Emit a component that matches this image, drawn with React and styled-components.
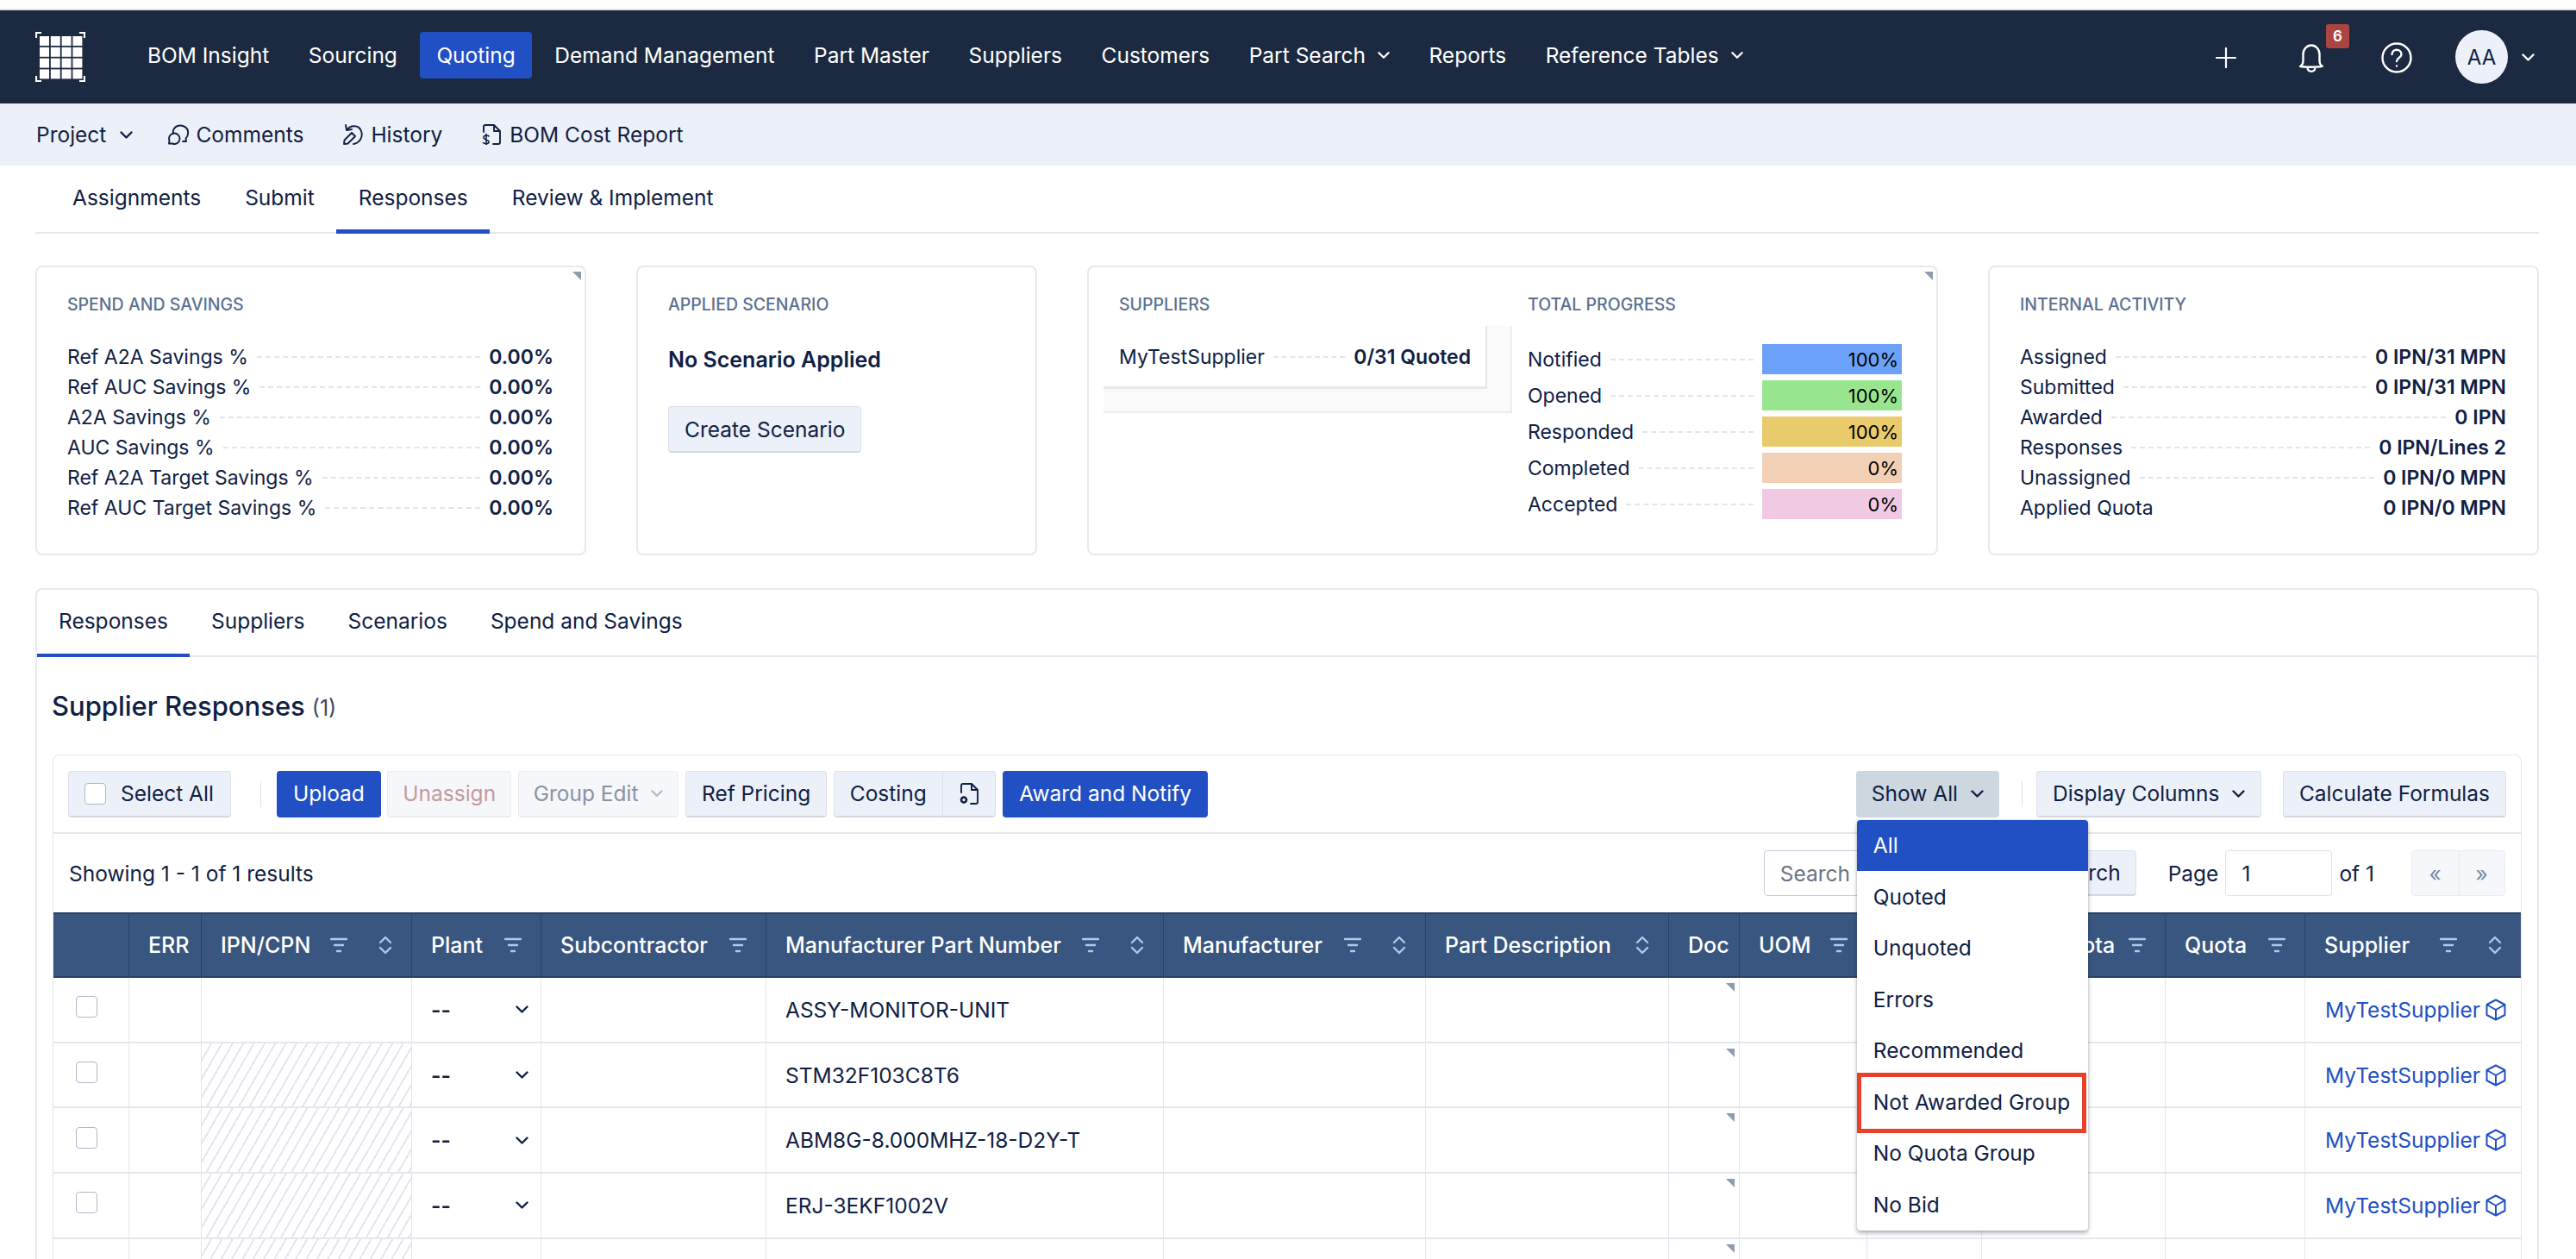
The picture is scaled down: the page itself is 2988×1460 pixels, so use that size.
import React from "react";
import styled, { createGlobalStyle, css } from "styled-components";

const ink = "#0f2044";
const blue = "#2150c4";
const line = "#e4e7ee";

const Global = createGlobalStyle`
  html, body { margin: 0; padding: 0; background: #fff; height: 1460px; overflow: hidden; }
  body { font-family: Inter, "Liberation Sans", sans-serif; color: ${ink}; }
  * { box-sizing: border-box; }
`;

const Page = styled.div`
  width: 2988px;
  height: 1460px;
  overflow: hidden;
  padding-top: 10px;
`;

const Header = styled.header`
  height: 110px;
  border-top: 2px solid #dfe2e4;
  background: #1b2a41;
  display: flex;
  align-items: center;
  padding: 0 48px 0 41px;
`;
const Logo = styled.svg`
  width: 58px;
  height: 58px;
  margin: 0 53px 0 0;
  flex: none;
`;
const MainNav = styled.nav`
  display: flex;
  gap: 7.5px;
  margin-top: -4px;
`;
const NavItem = styled.a`
  height: 54px;
  padding: 0 19px;
  display: flex;
  align-items: center;
  gap: 14px;
  border-radius: 4px;
  color: #fff;
  font-size: 24.5px;
  background: ${(p) => (p.$active ? blue : "transparent")};
`;
const HeaderTools = styled.div`
  margin-left: auto;
  display: flex;
  align-items: center;
  color: #fff;
`;
const IconSlot = styled.div`
  position: relative;
  display: flex;
  margin-left: ${(p) => p.$ml || 0}px;
  margin-top: ${(p) => p.$mt || 0}px;
`;
const Badge = styled.span`
  position: absolute;
  left: 32px;
  top: -23px;
  width: 27px;
  height: 28px;
  border-radius: 3px;
  background: #ab4541;
  color: #fff;
  font-size: 17px;
  font-weight: 600;
  display: flex;
  align-items: center;
  justify-content: center;
`;
const Avatar = styled.div`
  width: 61px;
  height: 62px;
  border-radius: 50%;
  margin-left: 50px;
  background: #ecf0f8;
  color: ${ink};
  font-size: 24px;
  display: flex;
  align-items: center;
  justify-content: center;
`;

const SubNav = styled.div`
  height: 72px;
  background: #ecf0f8;
  display: flex;
  align-items: center;
  padding-left: 42px;
  font-size: 24.5px;
`;
const SubItem = styled.a`
  display: flex;
  align-items: center;
  gap: ${(p) => p.$gap || 8}px;
  margin-right: ${(p) => p.$mr || 0}px;
  color: ${ink};
`;

const PageTabs = styled.div`
  height: 79px;
  margin: 0 43px 0 41px;
  padding-left: 17.5px;
  display: flex;
  border-bottom: 2px solid ${line};
`;
const PageTab = styled.a`
  padding: 0 25.5px;
  display: flex;
  align-items: center;
  font-size: 24.5px;
  color: ${ink};
  border-bottom: 5px solid ${(p) => (p.$active ? blue : "transparent")};
  height: 79px;
`;

const Cards = styled.section`
  display: grid;
  grid-template-columns: 639px 465px 987px 639px;
  column-gap: 58px;
  padding: 37px 0 0 41px;
  width: 2945px;
`;
const Card = styled.article`
  position: relative;
  height: 336px;
  border: 2px solid #e6e9ef;
  border-radius: 8px;
  padding: 31px 36px 0 35px;
  ${(p) =>
    p.$split &&
    css`
      display: grid;
      grid-template-columns: 474px 1fr;
      padding: 31px 40px 0 17px;
    `}
`;
const Corner = styled.span`
  position: absolute;
  top: ${(p) => p.$top || 5}px;
  right: ${(p) => p.$right || 4}px;
  width: 0;
  height: 0;
  border-style: solid;
  border-width: 0 10px 10px 0;
  border-color: transparent #8f9bb0 transparent transparent;
`;
const CardTitle = styled.h3`
  margin: 0;
  height: 24px;
  line-height: 24px;
  font-size: 19.5px;
  font-weight: 500;
  color: #5b7090;
  text-transform: uppercase;
`;
const Rows = styled.div`
  margin-top: 31.5px;
  display: flex;
  flex-direction: column;
`;
const Row = styled.div`
  height: 35px;
  display: flex;
  align-items: center;
  font-size: 23px;
`;
const Leader = styled.span`
  flex: 1;
  min-width: 0;
  margin: 0 10px;
  border-top: 2px dashed ${(p) => (p.$hidden ? "transparent" : "#e1e5ec")};
`;
const Value = styled.b`
  font-weight: 600;
`;
const ScenarioName = styled.div`
  margin-top: 35px;
  font-size: 25px;
  font-weight: 600;
  height: 34px;
  line-height: 34px;
`;
const Button = styled.button`
  font-family: inherit;
  height: 54px;
  padding: 0 ${(p) => p.$pad || 17}px;
  margin-left: ${(p) => p.$ml || 0}px;
  font-size: 24.5px;
  display: inline-flex;
  align-items: center;
  gap: 15px;
  flex: none;
  border-radius: 4px;
  border: 1.5px solid #dde1e9;
  border-bottom: 2.5px solid #d3d8e1;
  background: #ecf0f8;
  color: ${ink};
  ${(p) =>
    p.$primary &&
    css`
      background: ${blue};
      border-color: ${blue};
      color: #fff;
    `}
  ${(p) =>
    p.$disabled &&
    css`
      background: #f5f7fb;
      border-color: #e9ecf2;
      color: ${p.$disabled};
    `}
  ${(p) =>
    p.$open &&
    css`
      background: #cdd7e0;
      border-color: #cdd7e0;
    `}
`;
const ScenarioButton = styled(Button)`
  margin-top: 37px;
`;
const ScrollBox = styled.div`
  margin-top: 13px;
  height: 101px;
  width: 474px;
  background: #fafafa;
  border-right: 2px solid #ececec;
  border-bottom: 2px solid #ececec;
  padding: 0 27px 26px 0;
`;
const ScrollInner = styled.div`
  height: 73px;
  background: #fff;
  border-right: 2px solid #e8e8e8;
  border-bottom: 3px solid #e8e8e8;
  padding: 18px 17px 0 18px;
`;
const SupplierTitle = styled(CardTitle)`
  padding-left: 18px;
`;
const ProgressCol = styled.div`
  padding-left: 18px;
`;
const ProgressRows = styled.div`
  margin-top: 34px;
  display: flex;
  flex-direction: column;
  gap: 7px;
`;
const ProgressRow = styled.div`
  height: 35px;
  display: flex;
  align-items: center;
  font-size: 23px;
`;
const Bar = styled.div`
  width: 162px;
  height: 35px;
  flex: none;
  background: ${(p) => p.$c};
  color: #000;
  font-size: 22px;
  text-align: right;
  padding-right: 4px;
  line-height: 37px;
`;

const Panel = styled.section`
  margin: 38px 43px 0 41px;
  border: 2px solid #e6e9ef;
  border-radius: 8px;
  padding: 0 18px;
`;
const PanelTabs = styled.div`
  display: flex;
  height: 78px;
  margin: 0 -18px;
  border-bottom: 2px solid ${line};
`;
const PanelTab = styled.a`
  height: 78px;
  padding: 0 25px 2px;
  display: flex;
  align-items: center;
  font-size: 24.5px;
  color: ${ink};
  border-bottom: 4px solid ${(p) => (p.$active ? "#1f4fc0" : "transparent")};
`;
const SectionTitle = styled.h2`
  margin: 0 0 0 -1px;
  padding: 37px 0 0;
  height: 113px;
  font-size: 31px;
  line-height: 40px;
  font-weight: 500;
`;
const Count = styled.span`
  font-size: 25px;
  color: #3d4a63;
  font-weight: 400;
  margin-left: 8px;
`;
const Inner = styled.div`
  border: 1px solid ${line};
  border-radius: 8px 8px 0 0;
  border-bottom: 0;
  width: 2864px;
`;
const Toolbar = styled.div`
  height: 91px;
  display: flex;
  align-items: center;
  padding: 0 17px;
  border-bottom: 2px solid ${line};
  gap: 7.5px;
`;
const CheckBtn = styled(Button)`
  gap: 17px;
  padding-left: 18px;
  width: 189px;
`;
const Check = styled.span`
  width: 25px;
  height: 25px;
  flex: none;
  display: inline-block;
  background: #fff;
  border: 1.5px solid #aeb8c8;
  border-radius: 4px;
`;
const Divider = styled.span`
  width: 1px;
  height: 30px;
  flex: none;
  background: #dde1e9;
  margin: 0 ${(p) => p.$r || 18}px 0 ${(p) => p.$l || 26}px;
`;
const Split = styled.div`
  display: flex;
  flex: none;
`;
const SplitLeft = styled(Button)`
  border-radius: 4px 0 0 4px;
  border-right: 0;
`;
const SplitRight = styled(Button)`
  border-radius: 0 4px 4px 0;
  padding: 0 19px;
`;
const Spacer = styled.span`
  margin-left: auto;
`;
const DropWrap = styled.div`
  position: relative;
  flex: none;
`;
const Menu = styled.div`
  position: absolute;
  z-index: 5;
  left: 1px;
  top: 57px;
  width: 268px;
  background: #fff;
  border-radius: 4px;
  box-shadow: 0 3px 5px rgba(30, 40, 60, 0.35), 0 0 2px rgba(30, 40, 60, 0.2);
`;
const MenuItem = styled.div`
  position: relative;
  height: 59.5px;
  padding-left: 19px;
  display: flex;
  align-items: center;
  font-size: 24.5px;
  color: ${(p) => (p.$active ? "#fff" : ink)};
  background: ${(p) => (p.$active ? blue : "transparent")};
  border-radius: ${(p) => (p.$active ? "4px 4px 0 0" : 0)};
`;
const RedBox = styled.span`
  position: absolute;
  left: 0;
  top: -4px;
  right: 2px;
  height: 70px;
  border: 5px solid #e8412a;
`;
const ResultBar = styled.div`
  height: 91px;
  display: flex;
  align-items: center;
  padding: 0 18px;
  font-size: 24.5px;
`;
const SearchInput = styled.div`
  width: 314px;
  height: 53px;
  padding-left: 18px;
  display: flex;
  align-items: center;
  border: 1.5px solid #c6cfdc;
  border-radius: 4px 0 0 4px;
  color: #6a7386;
  background: #fff;
`;
const SearchBtn = styled(Button)`
  border-radius: 0 4px 4px 0;
  margin-right: 37px;
  width: 118px;
  height: 53px;
  justify-content: flex-end;
`;
const PageInput = styled.div`
  width: 124px;
  height: 53px;
  margin: 0 8px 0 8px;
  padding-left: 18px;
  display: flex;
  align-items: center;
  border: 1.5px solid #dfe3ea;
  border-radius: 4px;
`;
const Pager = styled.div`
  margin-left: 43px;
  width: 109px;
  height: 53px;
  display: grid;
  grid-template-columns: 1fr 1fr;
  background: #f5f7fb;
  border: 1.5px solid #e9ecf2;
  border-radius: 4px;
  color: #7d8a9f;
`;
const PagerCell = styled.span`
  display: flex;
  align-items: center;
  justify-content: center;
  & + & {
    border-left: 1.5px solid #e4e7ee;
  }
`;

const Table = styled.table`
  width: 2862px;
  table-layout: fixed;
  border-collapse: separate;
  border-spacing: 0;
`;
const Th = styled.th`
  height: 76px;
  padding: 0 22px;
  background: #385680;
  color: #fff;
  font-size: 25px;
  font-weight: 500;
  text-align: left;
  border-top: 2px solid #2b4264;
  border-bottom: 2px solid #2b4264;
  border-right: 1px solid #2b4264;
  white-space: nowrap;
  &:last-child { border-right: 0; }
`;
const ThInner = styled.div`
  display: flex;
  align-items: center;
`;
const ThIcons = styled.div`
  margin-left: auto;
  display: flex;
  align-items: center;
  gap: 36px;
  color: #b3c8e6;
`;
const Td = styled.td`
  position: relative;
  height: 75.7px;
  padding: 0 22px;
  font-size: 24.5px;
  white-space: nowrap;
  border-bottom: 2px solid ${line};
  border-right: 1px solid ${line};
  &:last-child { border-right: 0; }
  ${(p) =>
    p.$hatch &&
    css`
      background: repeating-linear-gradient(
        120deg,
        transparent 0,
        transparent 8.7px,
        #e3e6ee 8.7px,
        #e3e6ee 10.7px
      );
    `}
`;
const CheckCell = styled(Td)`
  padding-left: 26px;
`;
const PlantSelect = styled.div`
  display: flex;
  align-items: center;
  justify-content: space-between;
  font-weight: 600;
  margin-right: -8px;
`;
const SupplierLink = styled.a`
  display: flex;
  align-items: center;
  gap: 6px;
  color: ${blue};
  margin: 0 -4px 0 1px;
`;

const Stroke = styled.svg`
  flex: none;
  fill: none;
  stroke: currentColor;
  stroke-linecap: round;
  stroke-linejoin: round;
  opacity: ${(p) => (p.$dim ? 0.6 : 1)};
`;

const Chevron = ({ size = 15, width = 2.4, dim }) => (
  <Stroke width={size} height={size} viewBox="0 0 15 15" strokeWidth={width} $dim={dim}>
    <path d="M1.5 4.5 L7.5 10.5 L13.5 4.5" />
  </Stroke>
);
const FilterIcon = () => (
  <Stroke width="20" height="18" viewBox="0 0 20 18" strokeWidth="2.4">
    <path d="M1 2 H19 M5 9 H15 M8 16 H12" />
  </Stroke>
);
const SortIcon = () => (
  <Stroke width="16" height="22" viewBox="0 0 16 22" strokeWidth="2.4">
    <path d="M2 8 L8 2 L14 8 M2 14 L8 20 L14 14" />
  </Stroke>
);
const BoxIcon = () => (
  <Stroke width="24" height="26" viewBox="0 0 24 26" strokeWidth="2">
    <path d="M12 1.5 L22.5 7 V19 L12 24.5 L1.5 19 V7 Z M1.5 7 L12 13 L22.5 7 M12 13 V24.5" />
  </Stroke>
);

const LogoMark = () => (
  <Logo viewBox="0 0 58 58">
    <path d="M1 7 V1 H7 M51 1 H57 V7 M1 51 V57 H7 M51 57 H57 V51" fill="none" stroke="#fff" strokeWidth="2.2" />
    {[0, 1, 2, 3].map((r) =>
      [0, 1, 2, 3].map((c) => <rect key={`${r}${c}`} x={5 + c * 12.8} y={5 + r * 12.8} width="11" height="11" fill="#fff" />)
    )}
  </Logo>
);

const navItems = [
  ["BOM Insight"],
  ["Sourcing"],
  ["Quoting", true],
  ["Demand Management"],
  ["Part Master"],
  ["Suppliers"],
  ["Customers"],
  ["Part Search", false, true],
  ["Reports"],
  ["Reference Tables", false, true],
];

const spend = ["Ref A2A Savings %", "Ref AUC Savings %", "A2A Savings %", "AUC Savings %", "Ref A2A Target Savings %", "Ref AUC Target Savings %"];
const activity = [
  ["Assigned", "0 IPN/31 MPN"],
  ["Submitted", "0 IPN/31 MPN"],
  ["Awarded", "0 IPN"],
  ["Responses", "0 IPN/Lines 2"],
  ["Unassigned", "0 IPN/0 MPN"],
  ["Applied Quota", "0 IPN/0 MPN", true],
];
const progress = [
  ["Notified", "100%", "#6ba1f8"],
  ["Opened", "100%", "#99e58f"],
  ["Responded", "100%", "#eacb6c"],
  ["Completed", "0%", "#f2d0b6"],
  ["Accepted", "0%", "#f2c9e2"],
];
const columns = [
  ["", 88],
  ["ERR", 84],
  ["IPN/CPN", 244, true, true],
  ["Plant", 150, true],
  ["Subcontractor", 261, true],
  ["Manufacturer Part Number", 461, true, true],
  ["Manufacturer", 304, true, true],
  ["Part Description", 282, false, true],
  ["Doc", 82],
  ["UOM", 148, true],
  ["Qty", 133, true],
  ["Req. Quota", 213, true],
  ["Quota", 162, true],
  ["Supplier", 250, true, true],
];
const parts = ["ASSY-MONITOR-UNIT", "STM32F103C8T6", "ABM8G-8.000MHZ-18-D2Y-T", "ERJ-3EKF1002V", ""];
const menu = ["All", "Quoted", "Unquoted", "Errors", "Recommended", "Not Awarded Group", "No Quota Group", "No Bid"];

export default function App() {
  return (
    <Page>
      <Global />
      <Header>
        <LogoMark />
        <MainNav>
          {navItems.map(([label, active, more]) => (
            <NavItem key={label} $active={active}>
              {label}
              {more && <Chevron size={14} />}
            </NavItem>
          ))}
        </MainNav>
        <HeaderTools>
          <IconSlot $mt={2}>
            <Stroke width="24" height="24" viewBox="0 0 24 24" strokeWidth="2.2">
              <path d="M12 1 V23 M1 12 H23" />
            </Stroke>
          </IconSlot>
          <IconSlot $ml={72} $mt={4}>
            <Stroke width="30" height="34" viewBox="0 0 30 34" strokeWidth="2.4">
              <path d="M2 26 C4 25 5.5 23 5.5 19 V12 C5.5 6 10 1.5 15 1.5 C20 1.5 24.5 6 24.5 12 V19 C24.5 23 26 25 28 26 C28 27 2 27 2 26 Z M10.5 27 C11 33.5 19 33.5 19.5 27" />
            </Stroke>
            <Badge>6</Badge>
          </IconSlot>
          <IconSlot $ml={66} $mt={2}>
            <Stroke width="36" height="36" viewBox="0 0 36 36" strokeWidth="2.4">
              <circle cx="18" cy="18" r="16.5" />
              <path d="M12.5 14 C12.5 7 23.5 7 23.5 14 C23.5 18 18 18 18 22 M18 27.5 V27.6" />
            </Stroke>
          </IconSlot>
          <Avatar>AA</Avatar>
          <IconSlot $ml={16}>
            <Chevron />
          </IconSlot>
        </HeaderTools>
      </Header>

      <SubNav>
        <SubItem $gap={16} $mr={40}>
          Project <Chevron />
        </SubItem>
        <SubItem $gap={7} $mr={46}>
          <Stroke width="26" height="24" viewBox="0 0 26 24" strokeWidth="1.9">
            <path d="M7 11 A7.5 7.5 0 0 1 12 2 C18 0 25 4 24 11 C24 13 23 15 21.5 16.5 L22 20 L18 20" />
            <path d="M2 22.5 L2.5 19 A6.2 6.2 0 1 1 6 22.5 Z" />
          </Stroke>
          Comments
        </SubItem>
        <SubItem $gap={9} $mr={46}>
          <Stroke width="23" height="24" viewBox="0 0 23 24" strokeWidth="1.9">
            <path d="M3 1 L4 7 L10 6 M4 7 C8 1 18 0 21 8 C23.5 15 19 22 12 23" />
            <path d="M1 23 L1.5 18.5 L10 10 L14 14 L5.5 22.5 Z" />
          </Stroke>
          History
        </SubItem>
        <SubItem $gap={10}>
          <Stroke width="22" height="24" viewBox="0 0 22 24" strokeWidth="1.9">
            <path d="M2 9 V3 Q2 1 4 1 H14 L21 8 V21 Q21 23 19 23 H13 M14 1 V8 H21" />
            <path d="M8 14 C7 12.5 2 12.5 2 15.5 C2 18.5 8 17.5 8 20.5 C8 23.2 3 23.2 1.5 21.5 M5 11.5 V24" strokeWidth="1.6" />
          </Stroke>
          BOM Cost Report
        </SubItem>
      </SubNav>

      <PageTabs>
        <PageTab>Assignments</PageTab>
        <PageTab>Submit</PageTab>
        <PageTab $active>Responses</PageTab>
        <PageTab>Review &amp; Implement</PageTab>
      </PageTabs>

      <Cards>
        <Card>
          <Corner />
          <CardTitle>Spend and Savings</CardTitle>
          <Rows>
            {spend.map((s) => (
              <Row key={s}>
                {s}
                <Leader />
                <Value>0.00%</Value>
              </Row>
            ))}
          </Rows>
        </Card>
        <Card>
          <CardTitle>Applied Scenario</CardTitle>
          <ScenarioName>No Scenario Applied</ScenarioName>
          <ScenarioButton $pad={18}>Create Scenario</ScenarioButton>
        </Card>
        <Card $split>
          <Corner />
          <div>
            <SupplierTitle>Suppliers</SupplierTitle>
            <ScrollBox>
              <ScrollInner>
                <Row>
                  MyTestSupplier
                  <Leader />
                  <Value>0/31 Quoted</Value>
                </Row>
              </ScrollInner>
            </ScrollBox>
          </div>
          <ProgressCol>
            <CardTitle>Total Progress</CardTitle>
            <ProgressRows>
              {progress.map(([l, v, c]) => (
                <ProgressRow key={l}>
                  {l}
                  <Leader />
                  <Bar $c={c}>{v}</Bar>
                </ProgressRow>
              ))}
            </ProgressRows>
          </ProgressCol>
        </Card>
        <Card>
          <CardTitle>Internal Activity</CardTitle>
          <Rows>
            {activity.map(([l, v, noLeader]) => (
              <Row key={l}>
                {l}
                <Leader $hidden={noLeader} />
                <Value>{v}</Value>
              </Row>
            ))}
          </Rows>
        </Card>
      </Cards>

      <Panel>
        <PanelTabs>
          <PanelTab $active>Responses</PanelTab>
          <PanelTab>Suppliers</PanelTab>
          <PanelTab>Scenarios</PanelTab>
          <PanelTab>Spend and Savings</PanelTab>
        </PanelTabs>
        <SectionTitle>
          Supplier Responses<Count>(1)</Count>
        </SectionTitle>
        <Inner>
          <Toolbar>
            <CheckBtn>
              <Check /> Select All
            </CheckBtn>
            <Divider $l={26} $r={11} />
            <Button $primary $pad={18}>Upload</Button>
            <Button $disabled="#c49a9a">Unassign</Button>
            <Button $disabled="#8a92a4">
              Group Edit <Chevron size={14} dim />
            </Button>
            <Button $pad={18}>Ref Pricing</Button>
            <Split>
              <SplitLeft $pad={18}>Costing</SplitLeft>
              <SplitRight>
                <Stroke width="22" height="25" viewBox="0 0 22 25" strokeWidth="1.9">
                  <path d="M2 11 V3 Q2 1 4 1 H14 L21 8 V22 Q21 24 19 24 H13 M14 1 V8 H21" />
                  <circle cx="5" cy="19.5" r="3" strokeWidth="2.6" />
                </Stroke>
              </SplitRight>
            </Split>
            <Button $primary $pad={18} $ml={1}>Award and Notify</Button>
            <Spacer />
            <DropWrap>
              <Button $open>
                Show All <Chevron />
              </Button>
              <Menu>
                {menu.map((m, i) => (
                  <MenuItem key={m} $active={i === 0}>
                    {m}
                    {i === 5 && <RedBox />}
                  </MenuItem>
                ))}
              </Menu>
            </DropWrap>
            <Divider $l={18} $r={9} />
            <Button $pad={18}>
              Display Columns <Chevron />
            </Button>
            <Button $pad={18} $ml={17}>Calculate Formulas</Button>
          </Toolbar>
          <ResultBar>
            Showing 1 - 1 of 1 results
            <Spacer />
            <SearchInput>Search</SearchInput>
            <SearchBtn>Search</SearchBtn>
            Page
            <PageInput>1</PageInput>
            of 1
            <Pager>
              <PagerCell>«</PagerCell>
              <PagerCell>»</PagerCell>
            </Pager>
          </ResultBar>
          <Table>
            <colgroup>
              {columns.map(([n, w]) => (
                <col key={n || "sel"} width={w} />
              ))}
            </colgroup>
            <thead>
              <tr>
                {columns.map(([n, , f, s]) => (
                  <Th key={n || "sel"}>
                    <ThInner>
                      {n}
                      {(f || s) && (
                        <ThIcons>
                          {f && <FilterIcon />}
                          {s && <SortIcon />}
                        </ThIcons>
                      )}
                    </ThInner>
                  </Th>
                ))}
              </tr>
            </thead>
            <tbody>
              {parts.map((p, i) => (
                <tr key={i}>
                  <CheckCell>{p && <Check />}</CheckCell>
                  <Td />
                  <Td $hatch={i > 0} />
                  <Td>
                    {p && (
                      <PlantSelect>
                        -- <Chevron />
                      </PlantSelect>
                    )}
                  </Td>
                  <Td />
                  <Td>{p}</Td>
                  <Td />
                  <Td />
                  <Td>
                    <Corner $top={6} $right={5} />
                  </Td>
                  <Td />
                  <Td />
                  <Td />
                  <Td />
                  <Td>
                    {p && (
                      <SupplierLink>
                        MyTestSupplier <BoxIcon />
                      </SupplierLink>
                    )}
                  </Td>
                </tr>
              ))}
            </tbody>
          </Table>
        </Inner>
      </Panel>
    </Page>
  );
}
